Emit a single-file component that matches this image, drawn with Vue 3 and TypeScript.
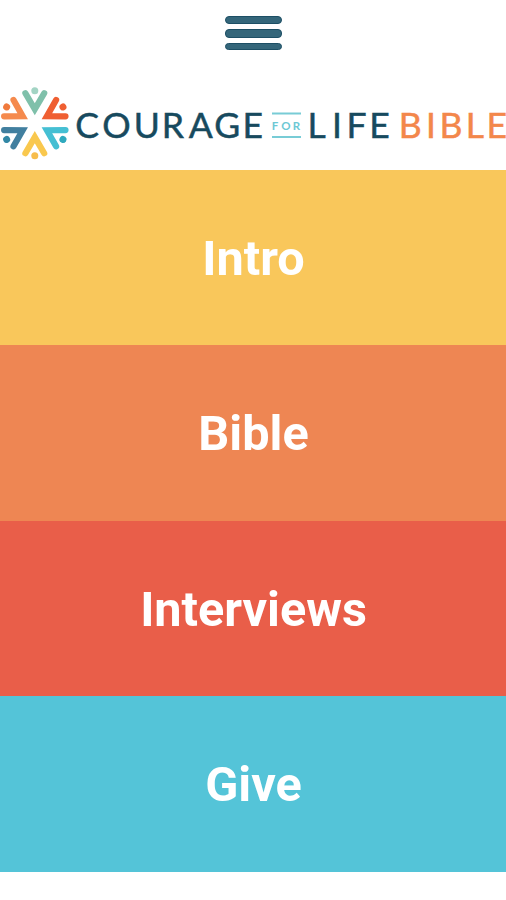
<script setup lang="ts">
interface Section {
  label: string
  tone: string
}

const sections: Section[] = [
  { label: 'Intro', tone: 'yellow' },
  { label: 'Bible', tone: 'orange' },
  { label: 'Interviews', tone: 'red' },
  { label: 'Give', tone: 'aqua' },
]

const petals: { angle: number; color: string; dot: string }[] = [
  { angle: 0, color: '#7fc0aa', dot: '#a3d4c4' },
  { angle: 60, color: '#ef5f32', dot: '#ef5f32' },
  { angle: 120, color: '#45bfd3', dot: '#2fa9be' },
  { angle: 180, color: '#f9c84e', dot: '#f7bd4b' },
  { angle: 240, color: '#417f9f', dot: '#3187a5' },
  { angle: 300, color: '#f58a4d', dot: '#f07a3d' },
]
</script>

<template>
  <main class="screen">
    <header class="header">
      <button class="menu" aria-label="Menu">
        <span class="bar"></span>
        <span class="bar middle"></span>
        <span class="bar"></span>
      </button>
      <svg class="brand" width="506" height="90" viewBox="0 80 506 90">
        <g transform="translate(34.8 123.2)">
          <g v-for="p in petals" :key="p.angle" :transform="`rotate(${p.angle})`">
            <path d="M-9.4 -30L0 -14L9.4 -30" fill="none" :stroke="p.color" stroke-width="6.2" stroke-linecap="round" />
            <circle cx="0" cy="-32.5" r="3.5" :fill="p.dot" />
          </g>
        </g>
        <text class="word navy" x="75.3 102.3 133.8 161.7 188.8 214.3 242.5" y="138">COURAGE</text>
        <path class="rule" d="M272 113.5H301M272 137H301" />
        <text class="small" x="271.7 281.3 292.7" y="129.7">FOR</text>
        <text class="word navy" x="307.6 332 346.6 369.3" y="138">LIFE</text>
        <text class="word coral" x="398.7 426 439.5 465.8 486.6" y="138">BIBLE</text>
      </svg>
    </header>
    <nav class="sections">
      <button v-for="s in sections" :key="s.label" class="section" :class="s.tone">{{ s.label }}</button>
    </nav>
  </main>
</template>

<style>
body {
  margin: 0;
  background: #fff;
}
</style>

<style scoped>
.screen {
  height: 900px;
  overflow: hidden;
  background: #fff;
}
.header {
  display: flex;
  flex-direction: column;
  align-items: center;
  height: 169.5px;
  padding-top: 16px;
  box-sizing: border-box;
}
.menu {
  display: flex;
  flex-direction: column;
  gap: 5px;
  width: 57px;
  height: 64px;
  padding: 0;
  border: 0;
  background: none;
  flex: none;
}
.bar {
  width: 57px;
  height: 7.5px;
  box-sizing: border-box;
  border: 1.5px solid #1d4f65;
  border-radius: 4px;
  background: #34667a;
}
.middle {
  height: 9px;
}
.brand {
  display: block;
  flex: none;
}
.word {
  font: 400 35.5px Lato, sans-serif;
}
.navy {
  fill: #174a5e;
  stroke: #174a5e;
  stroke-width: 0.5;
}
.coral {
  fill: #f3874b;
  stroke: #f3874b;
  stroke-width: 0.5;
}
.small {
  font: 700 11.5px Lato, sans-serif;
  fill: #6cc8d4;
}
.rule {
  stroke: #78ccd6;
  stroke-width: 2;
}
.sections {
  display: grid;
  grid-template-rows: repeat(4, 175.5px);
}
.section {
  padding: 3px 0 0 1px;
  border: 0;
  color: #fff;
  font: 700 48.6px/56px Roboto, sans-serif;
}
.yellow {
  background: #f9c75b;
}
.orange {
  background: #ee8653;
}
.red {
  background: #e95e49;
}
.aqua {
  background: #54c4d8;
}
</style>
